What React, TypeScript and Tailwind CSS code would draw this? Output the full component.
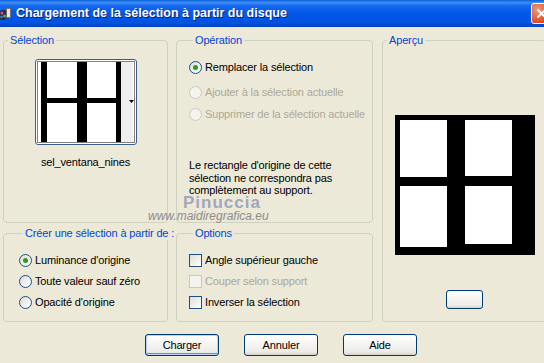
import React from "react";

function Radio({ label, checked, disabled }: { label: string; checked?: boolean; disabled?: boolean }) {
  return (
    <div className="flex h-[13px] items-center gap-[3px]">
      <span
        className={
          disabled
            ? "flex h-[13px] w-[13px] shrink-0 items-center justify-center rounded-full border border-[#cac8bb] bg-[#f4f3ee]"
            : "flex h-[13px] w-[13px] shrink-0 items-center justify-center rounded-full border border-[#1c5180] bg-[linear-gradient(135deg,#dcdcd7,#ffffff)]"
        }
      >
        {checked && <span className="h-[5px] w-[5px] rounded-full bg-[#21a121]" />}
      </span>
      <span className={disabled ? "whitespace-nowrap text-[#aca899]" : "whitespace-nowrap text-black"}>{label}</span>
    </div>
  );
}

function Check({ label, disabled }: { label: string; disabled?: boolean }) {
  return (
    <div className="flex h-[13px] items-center gap-[3px]">
      <span
        className={
          disabled
            ? "h-[13px] w-[13px] shrink-0 border border-[#cac8bb] bg-[#f4f3ee]"
            : "h-[13px] w-[13px] shrink-0 border border-[#1c5180] bg-[linear-gradient(135deg,#dcdcd7,#ffffff)]"
        }
      />
      <span className={disabled ? "whitespace-nowrap text-[#aca899]" : "whitespace-nowrap text-black"}>{label}</span>
    </div>
  );
}

function Group({ title, className, children }: { title: string; className?: string; children?: React.ReactNode }) {
  return (
    <fieldset className={`min-w-0 rounded-[4px] border border-[#d0d0bf] ${className ?? ""}`}>
      <legend className="ml-[4px] whitespace-nowrap px-[2px] leading-[13px] text-[#0046d5]">{title}</legend>
      {children}
    </fieldset>
  );
}

function XpButton({ label, isDefault }: { label: string; isDefault?: boolean }) {
  return (
    <button
      className={
        isDefault
          ? "flex h-[22px] w-[74px] items-center justify-center rounded-[3px] border border-[#003c74] bg-[linear-gradient(to_bottom,#ffffff,#ecebe6_85%,#d6d0c5)] text-black shadow-[inset_0_0_0_1px_#b9d1fa,inset_0_-1px_0_1px_#6d8fda]"
          : "flex h-[22px] w-[74px] items-center justify-center rounded-[3px] border border-[#003c74] bg-[linear-gradient(to_bottom,#ffffff,#ecebe6_85%,#d6d0c5)] text-black"
      }
    >
      {label}
    </button>
  );
}

function Thumb() {
  return (
    <div className="h-[86px] w-[102px] overflow-hidden rounded-[3px] border border-[#3c5f8a] bg-white">
      <svg width="100" height="84" viewBox="0 0 100 84">
        <rect x="85" y="2" width="12" height="80" fill="#efefef" />
        <rect x="5" y="2" width="6" height="80" fill="#000" />
        <rect x="41" y="2" width="10" height="80" fill="#000" />
        <rect x="80" y="2" width="5" height="80" fill="#000" />
        <rect x="5" y="38" width="80" height="5" fill="#000" />
        <rect x="1.5" y="1.5" width="97" height="81" fill="none" stroke="#000" strokeDasharray="1 1" />
        <path d="M93 40 L98 40 L95.5 43 Z" fill="#000" />
      </svg>
    </div>
  );
}

function Preview() {
  return (
    <svg width="140" height="140" viewBox="0 0 140 140">
      <rect width="140" height="140" fill="#000" />
      <rect x="5" y="5" width="47" height="57" fill="#fff" />
      <rect x="70" y="5" width="47" height="56" fill="#fff" />
      <rect x="5" y="71" width="47" height="61" fill="#fff" />
      <rect x="70" y="71" width="47" height="58" fill="#fff" />
    </svg>
  );
}

export default function App() {
  return (
    <div className="relative h-[363px] w-[544px] overflow-hidden bg-[#ece9d8] font-['Liberation_Sans',sans-serif] text-[11px] tracking-[-0.15px]">
      {/* title bar */}
      <div className="flex h-[27px] items-center bg-[linear-gradient(to_bottom,#0a5fd8_0%,#3d8ef8_10%,#1567ee_22%,#0058ea_50%,#0053e0_85%,#0040bb_100%)]">
        <svg width="11" height="14" viewBox="0 0 11 14" className="mt-[1px]">
          <circle cx="3" cy="8" r="5" fill="#2a2a3a" />
          <circle cx="2" cy="6" r="1.5" fill="#e04aa0" />
          <circle cx="4.5" cy="9" r="1.5" fill="#3cc04a" />
          <circle cx="1.5" cy="10" r="1.2" fill="#3a8af0" />
          <rect x="6.5" y="1.5" width="4" height="9" fill="#e8e8e8" stroke="#707070" />
        </svg>
        <span className="ml-[5px] whitespace-nowrap text-[12.5px] font-bold tracking-normal text-white [text-shadow:1px_1px_0_#0a1f6e]">
          Chargement de la sélection à partir du disque
        </span>
        <div className="ml-auto mr-[-8px] flex h-[21px] w-[21px] items-center justify-center rounded-[3px] border border-white bg-[radial-gradient(circle_at_30%_30%,#f09a7a,#e0552c_60%,#c03a14)]">
          <svg width="11" height="11" viewBox="0 0 11 11">
            <path d="M1.5 1.5 L9.5 9.5 M9.5 1.5 L1.5 9.5" stroke="#fff" strokeWidth="2" />
          </svg>
        </div>
      </div>

      {/* body */}
      <div className="px-[3px] pt-[7px]">
        <div className="grid w-max grid-cols-[165px_197px_166px] grid-rows-[189px_95px] gap-x-[8px] gap-y-[4px]">
          <Group title="Sélection" className="flex flex-col items-center">
            <div className="mt-[12px] flex flex-col items-center">
              <Thumb />
              <div className="mt-[11px] leading-[13px] text-black">sel_ventana_nines</div>
            </div>
          </Group>

          <Group title="Opération" className="pl-[12px]">
            <div className="mt-[14px]">
              <Radio label="Remplacer la sélection" checked />
            </div>
            <div className="mt-[12px]">
              <Radio label="Ajouter à la sélection actuelle" disabled />
            </div>
            <div className="mt-[9px]">
              <Radio label="Supprimer de la sélection actuelle" disabled />
            </div>
            <p className="mt-[38px] leading-[12.5px] text-black">
              Le rectangle d'origine de cette
              <br />
              sélection ne correspondra pas
              <br />
              complètement au support.
            </p>
          </Group>

          <Group title="Aperçu" className="row-span-2 ml-px flex flex-col items-center">
            <div className="mt-[68px] flex">
              <Preview />
            </div>
            <div className="mt-[35px] h-[19px] w-[37px] rounded-[3px] border border-[#003c74] bg-[linear-gradient(to_bottom,#ffffff,#ecebe6_85%,#d6d0c5)]" />
          </Group>

          <Group title="Créer une sélection à partir de :" className="pl-[15px]">
            <div className="mt-[14px]">
              <Radio label="Luminance d'origine" checked />
            </div>
            <div className="mt-[8px]">
              <Radio label="Toute valeur sauf zéro" />
            </div>
            <div className="mt-[8px]">
              <Radio label="Opacité d'origine" />
            </div>
          </Group>

          <Group title="Options" className="pl-[12px]">
            <div className="mt-[14px]">
              <Check label="Angle supérieur gauche" />
            </div>
            <div className="mt-[8px]">
              <Check label="Couper selon support" disabled />
            </div>
            <div className="mt-[8px]">
              <Check label="Inverser la sélection" />
            </div>
          </Group>
        </div>

        <div className="ml-[142px] mt-[12px] flex gap-[25px]">
          <XpButton label="Charger" isDefault />
          <XpButton label="Annuler" />
          <XpButton label="Aide" />
        </div>
      </div>

      {/* watermark */}
      <div className="absolute left-[183px] top-[197px] text-[17px] font-bold leading-[11px] tracking-[1px] text-[#a2a7bb]">
        Pinuccia
      </div>
      <div className="absolute left-[148px] top-[210px] text-[12px] italic leading-[12px] tracking-normal text-[#8c8c8c]">
        www.maidiregrafica.eu
      </div>
    </div>
  );
}
